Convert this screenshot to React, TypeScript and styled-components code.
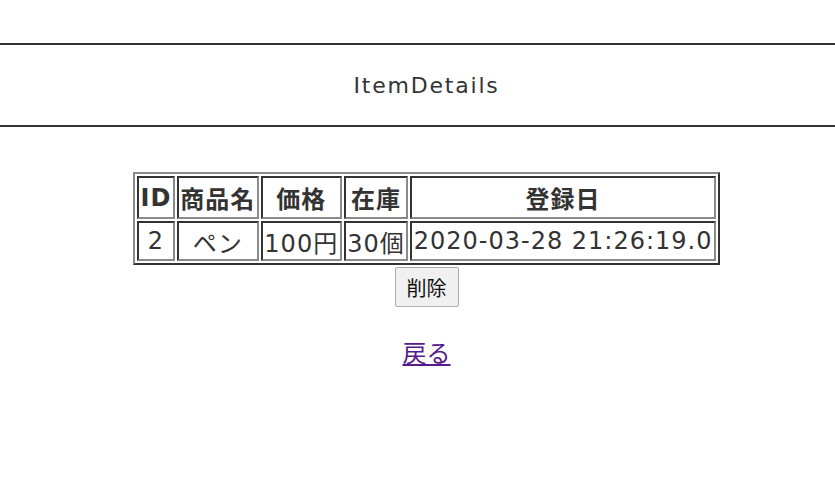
import React from "react";
import styled, { createGlobalStyle } from "styled-components";

const Global = createGlobalStyle`
  html, body { margin: 0; padding: 0; background: #fff; }
  body { font-family: "DejaVu Sans", Verdana, "Noto Sans CJK JP", sans-serif; color: #333; }
`;

const Header = styled.header`
  margin-top: 43px;
  border-top: 2px solid #333;
  border-bottom: 2px solid #333;
  height: 80px;
  display: flex;
  align-items: center;
  justify-content: center;
  padding-left: 18px;
`;

const Title = styled.h1`
  margin: 0;
  font-weight: normal;
  font-size: 22px;
  letter-spacing: 1.8px;
  color: #333;
`;

const Main = styled.main`
  display: flex;
  flex-direction: column;
  align-items: center;
  padding-left: 18px;
  padding-top: 45px;
`;

const Table = styled.table`
  border-collapse: separate;
  border-spacing: 2px;
  border-style: solid;
  border-width: 2px;
  border-color: #8a8a8a #333 #333 #8a8a8a;
  font-size: 24px;
  letter-spacing: 1px;
`;

const Th = styled.th`
  border-style: solid;
  border-width: 2px;
  border-color: #333 #8a8a8a #8a8a8a #333;
  padding: 0 1.5px;
  height: 39px;
  font-weight: bold;
  text-align: center;
`;

const Td = styled.td`
  border-style: solid;
  border-width: 2px;
  border-color: #333 #8a8a8a #8a8a8a #333;
  padding: 0 1.5px;
  height: 36px;
  text-align: center;
  white-space: nowrap;
`;

const Button = styled.button`
  margin-top: 2px;
  font-family: "DejaVu Sans", "Noto Sans CJK JP", sans-serif;
  font-size: 20px;
  color: #111;
  background: #f0f0f0;
  border: 1px solid #adadad;
  border-radius: 2px;
  width: 64px;
  height: 40px;
  padding: 0;
`;

const BackLink = styled.a`
  margin-top: 27px;
  font-size: 24px;
  color: #551a8b;
  text-decoration: underline;
`;

export default function App() {
  return (
    <>
      <Global />
      <Header>
        <Title>ItemDetails</Title>
      </Header>
      <Main>
        <Table>
          <thead>
            <tr>
              <Th>ID</Th>
              <Th>商品名</Th>
              <Th>価格</Th>
              <Th>在庫</Th>
              <Th>登録日</Th>
            </tr>
          </thead>
          <tbody>
            <tr>
              <Td>2</Td>
              <Td>ペン</Td>
              <Td>100円</Td>
              <Td>30個</Td>
              <Td>2020-03-28 21:26:19.0</Td>
            </tr>
          </tbody>
        </Table>
        <Button>削除</Button>
        <BackLink href="#">戻る</BackLink>
      </Main>
    </>
  );
}
